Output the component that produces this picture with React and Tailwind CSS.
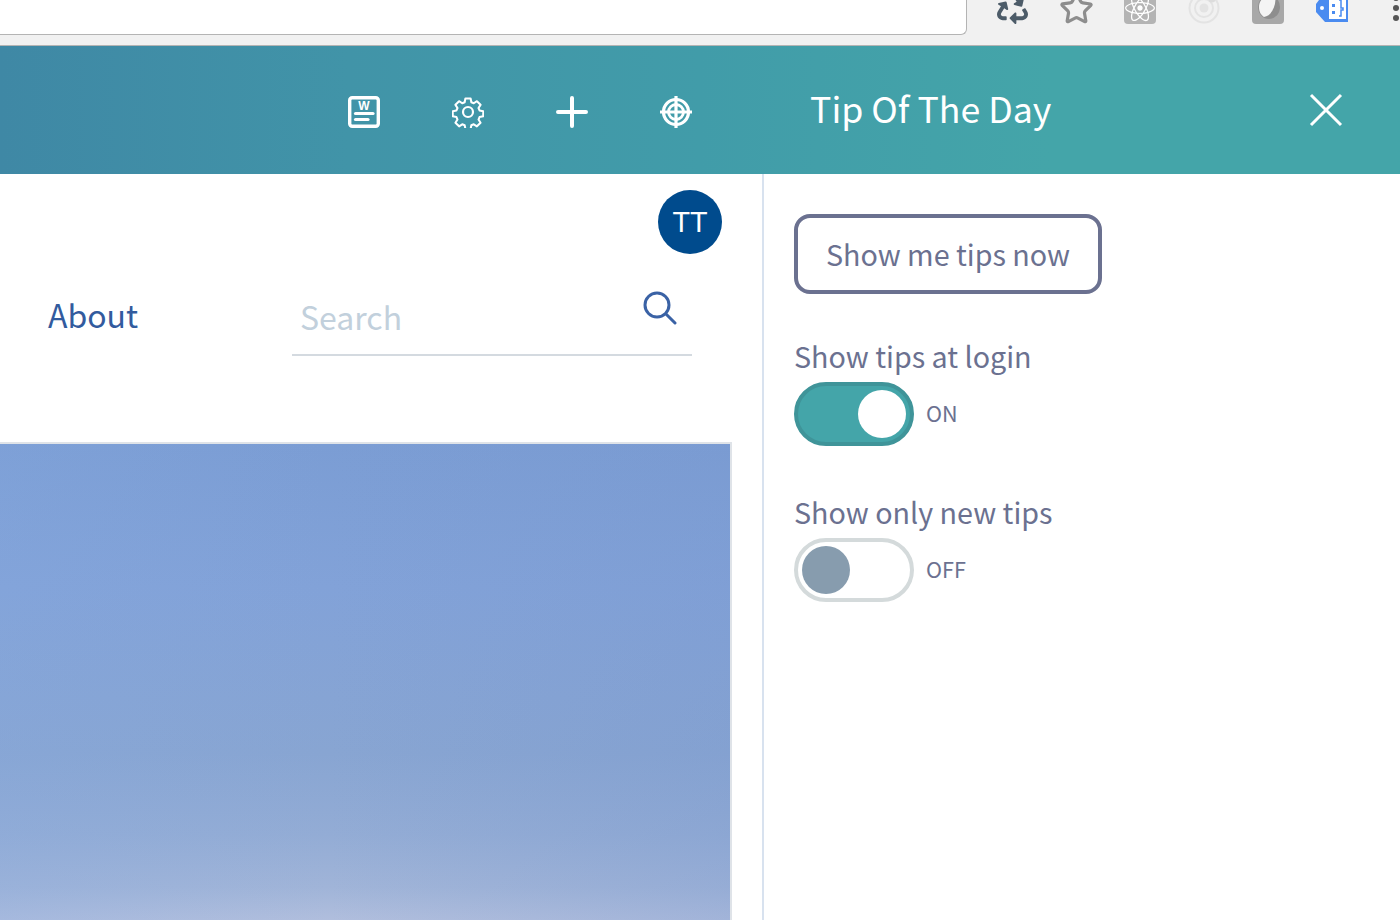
import React from "react";
import { FaRecycle, FaReact } from "react-icons/fa";
import { Star } from "lucide-react";

const FONT = "font-['Noto_Sans_CJK_SC','Noto_Sans',sans-serif]";

function ToggleRow({ label, on }) {
  return (
    <div className="flex flex-col">
      <div className="text-[28.7px] leading-[36px] h-[40px] text-[#6b7190]">{label}</div>
      <div className="flex items-center gap-3 mt-[4px]">
        {on ? (
          <div className="w-[120px] h-[64px] rounded-full border-4 border-[#3f9499] bg-[#44a5a9] flex items-center justify-end pr-1">
            <div className="w-12 h-12 rounded-full bg-white" />
          </div>
        ) : (
          <div className="w-[120px] h-[64px] rounded-full border-4 border-[#d4dadb] bg-white flex items-center pl-1">
            <div className="w-12 h-12 rounded-full bg-[#879cae]" />
          </div>
        )}
        <span className="text-[21.6px] leading-[30px] pb-[2px] text-[#6b7190]">{on ? "ON" : "OFF"}</span>
      </div>
    </div>
  );
}

export default function App() {
  return (
    <div className={`${FONT} w-[1400px] h-[920px] overflow-hidden bg-white flex flex-col`}>
      {/* browser chrome */}
      <div className="h-[46px] shrink-0 bg-[#f1f1f1] border-b border-[#b4b4b4] flex overflow-hidden">
        <div className="w-[967px] h-[35px] shrink-0 bg-white border-b border-r border-[#b4b4b4] rounded-br-md" />
        <div className="flex gap-8 -mt-2 ml-[29px] h-8 items-start">
          <div className="w-8 h-8 flex items-center justify-center"><FaRecycle size={31} color="#4d5c69" /></div>
          <div className="w-8 h-8 flex items-center justify-center"><Star size={35} color="#8d8d8d" strokeWidth={2.2} className="shrink-0" /></div>
          <div className="w-8 h-8 rounded bg-[#b4b4b4] flex items-center justify-center"><FaReact size={30} color="#fff" /></div>
          <div className="w-8 h-8 flex items-center justify-center">
            <svg width="32" height="32" viewBox="0 0 32 32" fill="none">
              <circle cx="16" cy="16" r="14.5" stroke="#e3e3e3" strokeWidth="2" />
              <circle cx="16" cy="16" r="9" stroke="#e3e3e3" strokeWidth="2" />
              <circle cx="16" cy="16" r="4.5" fill="#e3e3e3" />
              <circle cx="24" cy="7" r="3.5" fill="#dcdcdc" />
            </svg>
          </div>
          <div className="w-8 h-8 flex items-center justify-center">
            <svg width="32" height="32" viewBox="0 0 32 32">
              <rect width="32" height="32" rx="4" fill="#a8a8a8" />
              <ellipse cx="17" cy="15" rx="11" ry="12" fill="#8e8e8e" />
              <path d="M7 15 C7 6 15 3 23 3 C25 12 20 24 12 25 C9 23 7 20 7 15Z" fill="#f4f4f4" />
            </svg>
          </div>
          <div className="w-8 h-8 flex items-center justify-center">
            <svg width="32" height="32" viewBox="0 0 32 32">
              <path d="M9 0H32V30H9L0 20V12Z" fill="#4a8bf0" />
              <rect x="13" y="3" width="17" height="24" fill="#fff" />
              <circle cx="6" cy="16" r="2" fill="#fff" />
              <rect x="16" y="12" width="3" height="3" fill="#4a8bf0" />
              <rect x="16" y="19" width="3" height="3" fill="#4a8bf0" />
              <path d="M23 8h2v8h2v2h-2v6h-2" fill="none" stroke="#4a8bf0" strokeWidth="1.5" />
            </svg>
          </div>
          <div className="w-[6px] h-8 ml-[13px] pt-[3px] flex flex-col gap-[4px] items-center">
            <div className="w-[6px] h-[6px] rounded-full bg-[#555] shrink-0" />
            <div className="w-[6px] h-[6px] rounded-full bg-[#555] shrink-0" />
            <div className="w-[6px] h-[6px] rounded-full bg-[#555] shrink-0" />
          </div>
        </div>
      </div>

      {/* teal header */}
      <div className="h-[128px] shrink-0 flex items-center bg-[linear-gradient(90deg,#3f88a5_0%,#4194a8_25%,#419ca9_50%,#44a5a9_75%,#44a5a9_100%)]">
        <div className="w-[764px] shrink-0 flex justify-end pr-[36px]">
          <div className="w-[104px] flex justify-center">
            <svg width="32" height="32" viewBox="0 0 32 32" fill="none" className="mt-[3px]">
              <rect x="1.7" y="1.7" width="28.6" height="28.6" rx="2.5" stroke="#fff" strokeWidth="3.4" />
              <text x="16" y="14" textAnchor="middle" fontSize="12" fontWeight="700" fill="#fff" fontFamily="Liberation Sans">W</text>
              <path d="M7.5 17.5H25" stroke="#fff" strokeWidth="3.2" strokeLinecap="round" />
              <path d="M7.5 23.5H20" stroke="#fff" strokeWidth="3.2" strokeLinecap="round" />
            </svg>
          </div>
          <div className="w-[104px] flex justify-center">
            <svg width="32" height="32" viewBox="0 0 32 32" fill="none" stroke="#fff" strokeWidth="2.2" strokeLinejoin="round" className="mt-[3px]">
              <path d="M13.2 1.5h5.6l.8 4 2.6 1.1 3.4-2.2 3.9 3.9-2.2 3.4 1.1 2.6 4 .8v5.6l-4 .8-1.1 2.6 2.2 3.4-3.9 3.9-3.4-2.2-2.6 1.1-.8 4h-5.6l-.8-4-2.6-1.1-3.4 2.2-3.9-3.9 2.2-3.4-1.1-2.6-4-.8v-5.6l4-.8 1.1-2.6-2.2-3.4 3.9-3.9 3.4 2.2 2.6-1.1z" transform="translate(16 16) scale(.93) translate(-16 -16)" />
              <circle cx="16" cy="16" r="5" />
            </svg>
          </div>
          <div className="w-[104px] flex justify-center">
            <svg width="32" height="32" viewBox="0 0 32 32" fill="none" stroke="#fff" strokeWidth="4" strokeLinecap="round" className="mt-[3px]">
              <path d="M16 2V30M2 16H30" />
            </svg>
          </div>
          <div className="w-[104px] flex justify-center">
            <svg width="32" height="32" viewBox="0 0 32 32" fill="none" stroke="#fff" className="mt-[3px]">
              <circle cx="16" cy="16" r="12.5" strokeWidth="3.2" />
              <circle cx="16" cy="16" r="7.5" strokeWidth="2.8" />
              <path d="M16 0.5V31.5M0.5 16H31.5" strokeWidth="3.2" strokeLinecap="round" />
            </svg>
          </div>
        </div>
        <div className="flex-1 flex items-center justify-between pl-[46px] pr-[57px]">
          <span className="text-[35.7px] leading-[48px] -mt-[4px] text-white">Tip Of The Day</span>
          <svg width="34" height="34" viewBox="0 0 34 34" fill="none" stroke="#fff" strokeWidth="3">
            <path d="M2 2L32 32M32 2L2 32" />
          </svg>
        </div>
      </div>

      {/* body */}
      <div className="flex-1 flex min-h-0">
        <div className="w-[764px] shrink-0 border-r-2 border-[#d8e2ef] flex flex-col">
          <div className="flex justify-end pt-4 pr-10">
            <div className="w-16 h-16 rounded-full bg-[#004b8d] text-white text-[28.8px] pt-[2px] flex items-center justify-center font-['Liberation_Sans',sans-serif]">
              TT
            </div>
          </div>
          <div className="flex items-start pl-12 mt-[22px] h-[80px]">
            <span className="text-[32px] leading-[76px] text-[#325b9e] w-[244px]">About</span>
            <div className="w-[400px] h-[80px] border-b-2 border-[#d4dae0] flex justify-between pl-[8px] pr-[15px]">
              <span className="text-[32px] leading-[80px] text-[#c2d0dc]">Search</span>
              <svg width="34" height="36" viewBox="0 0 34 36" fill="none" stroke="#3a62a5" strokeWidth="3" strokeLinecap="round" className="mt-[14px]">
                <circle cx="14" cy="15" r="12" />
                <path d="M23 24L32 33" />
              </svg>
            </div>
          </div>
          <div className="w-[732px] flex-1 mt-[86px] border-t-2 border-r-2 border-[#dfe3e8] bg-[linear-gradient(90deg,rgba(134,170,224,0.25)_0%,rgba(134,170,224,0)_45%,rgba(120,150,205,0.25)_100%),linear-gradient(180deg,#7b9dd4_0%,#82a2d8_30%,#88a5d2_65%,#93acd5_82%,#a0b4d8_93%,#b0bedd_100%)]" />
        </div>
        <div className="flex-1 pl-[30px] pt-10">
          <button className="w-[308px] h-20 rounded-2xl border-4 border-[#6b7190] bg-white text-[28.7px] text-[#6b7190] flex items-center justify-center">
            Show me tips now
          </button>
          <div className="mt-[44px]">
            <ToggleRow label="Show tips at login" on />
          </div>
          <div className="mt-[48px]">
            <ToggleRow label="Show only new tips" on={false} />
          </div>
        </div>
      </div>
    </div>
  );
}
